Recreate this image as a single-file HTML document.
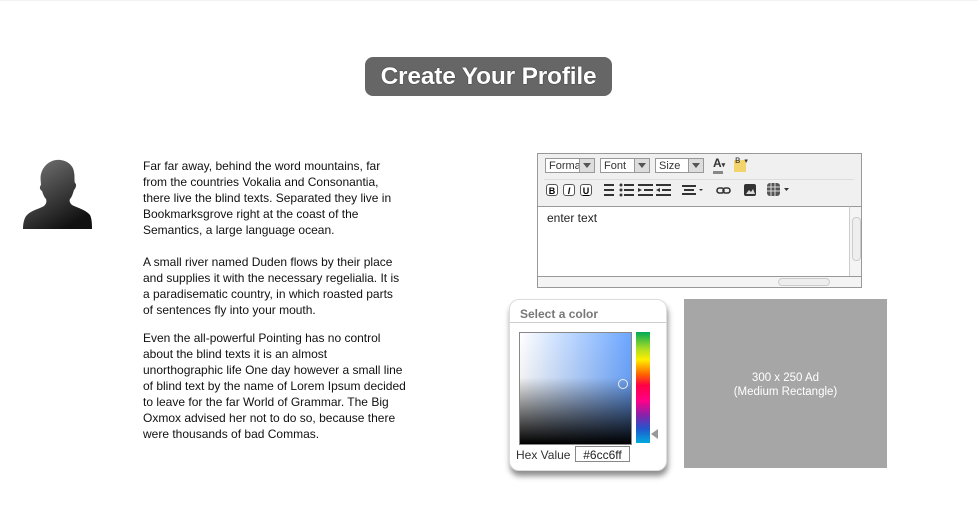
<!DOCTYPE html>
<html><head><style>
body{margin:0;width:978px;height:510px;background:#fff;font-family:"Liberation Sans",Arial,sans-serif;position:relative;overflow:hidden;border-top:1px solid #f2f2f2;box-sizing:border-box}
.abs{position:absolute}
.title{left:365px;top:56px;width:247px;height:39px;background:#666;border-radius:8px;color:#fff;font-weight:bold;font-size:24.5px;line-height:39px;text-align:center;text-shadow:0 0 1px #000;letter-spacing:-0.2px}
.txt{left:143px;font-size:12px;line-height:16px;color:#111}
.ed{left:537px;top:152px;width:325px;height:135px;border:1px solid #999;background:#f0f0f0;box-sizing:border-box;overflow:hidden}
.sel{position:absolute;top:4px;height:15px;border:1px solid #999;background:#fff;font-size:11px;line-height:15px;padding-left:3px;box-sizing:border-box;color:#333}
.sel b{position:absolute;right:0;top:0;width:14px;height:13px;background:#ddd;border-left:1px solid #999}
.sel b:after{content:"";position:absolute;left:3px;top:4px;border:4px solid transparent;border-top:5px solid #555}
.btn{position:absolute;top:30px;width:12px;height:12px;border:1px solid #555;border-radius:3px;font-size:9px;line-height:12px;text-align:center;font-weight:bold;box-sizing:border-box;background:#fff}
.cp{left:509px;top:298px;width:158px;height:172px;background:#fff;border-radius:10px;border:1px solid #ddd;box-shadow:1px 5px 6px rgba(0,0,0,.45);box-sizing:border-box}
.ad{left:684px;top:298px;width:203px;height:169px;background:#a6a6a6;color:#fff;font-size:11.5px;text-align:center;line-height:14px}
</style></head><body>
<div class="abs title">Create Your Profile</div>

<svg class="abs" style="left:23px;top:158px" width="70" height="72" viewBox="0 0 70 72">
<defs><linearGradient id="g" x1="0" y1="0" x2="0.6" y2="1"><stop offset="0" stop-color="#7a7a7a"/><stop offset="1" stop-color="#111"/></linearGradient></defs>
<path d="M33 1c9-1 17 4 18 12 1 5 0 9 1 11 2 1 1 5-1 7-1 3-2 7-4 9-1 2 0 4 2 6 6 3 14 5 18 10 2 4 2 10 2 14H0c0-5 1-11 4-14 5-5 12-6 17-9 2-2 3-4 2-7-2-2-3-5-4-8-2-1-3-4-1-6 0-3-1-7 0-11 2-8 8-13 15-14z" fill="url(#g)"/>
</svg>

<div class="abs txt" style="top:157px">Far far away, behind the word mountains, far<br>from the countries Vokalia and Consonantia,<br>there live the blind texts. Separated they live in<br>Bookmarksgrove right at the coast of the<br>Semantics, a large language ocean.</div>
<div class="abs txt" style="top:253px">A small river named Duden flows by their place<br>and supplies it with the necessary regelialia. It is<br>a paradisematic country, in which roasted parts<br>of sentences fly into your mouth.</div>
<div class="abs txt" style="top:329px">Even the all-powerful Pointing has no control<br>about the blind texts it is an almost<br>unorthographic life One day however a small line<br>of blind text by the name of Lorem Ipsum decided<br>to leave for the far World of Grammar. The Big<br>Oxmox advised her not to do so, because there<br>were thousands of bad Commas.</div>

<div class="abs ed">
 <div class="sel" style="left:7px;width:50px">Forma<b></b></div>
 <div class="sel" style="left:62px;width:50px">Font<b></b></div>
 <div class="sel" style="left:117px;width:49px">Size<b></b></div>
 <div style="position:absolute;left:175px;top:2px;font-size:12px;font-weight:bold;color:#333">A<span style="font-size:7px">▾</span></div>
 <div style="position:absolute;left:175px;top:17px;width:10px;height:3px;background:#888"></div>
 <div style="position:absolute;left:196px;top:6px;width:12px;height:12px;background:#f3d36b"></div>
 <div style="position:absolute;left:197px;top:1px;font-size:10px;color:#333">ʙ<span style="font-size:7px;margin-left:4px">▾</span></div>
 <div style="position:absolute;left:6px;top:25px;width:310px;height:1px;background:#ddd"></div>
 <div class="btn" style="left:8px">B</div><div class="btn" style="left:25px;font-style:italic">I</div><div class="btn" style="left:42px;text-decoration:underline">U</div>
 <svg style="position:absolute;left:62px;top:28px" width="120" height="16"><g fill="#333">
  <rect x="4" y="2" width="10" height="2"/><rect x="4" y="7" width="10" height="2"/><rect x="4" y="12" width="10" height="2"/>
  <circle cx="21" cy="3" r="1.5"/><circle cx="21" cy="8" r="1.5"/><circle cx="21" cy="13" r="1.5"/>
  <rect x="24" y="2" width="10" height="2"/><rect x="24" y="7" width="10" height="2"/><rect x="24" y="12" width="10" height="2"/>
  <rect x="38" y="2" width="15" height="2"/><rect x="44" y="7" width="9" height="2"/><rect x="38" y="12" width="15" height="2"/><path d="M38 6l4 2-4 2z"/>
  <rect x="56" y="2" width="15" height="2"/><rect x="62" y="7" width="9" height="2"/><rect x="56" y="12" width="15" height="2"/><path d="M60 6l-4 2 4 2z"/>
  <rect x="82" y="3" width="14" height="2"/><rect x="84" y="7" width="10" height="2"/><rect x="82" y="11" width="14" height="2"/><path d="M99 7h4l-2 2z"/>
 </g></svg>
 <svg style="position:absolute;left:178px;top:30px" width="60" height="14"><rect x="1" y="4" width="7" height="5" rx="2.5" fill="none" stroke="#333" stroke-width="1.6"/><rect x="7" y="4" width="7" height="5" rx="2.5" fill="none" stroke="#333" stroke-width="1.6"/>
 <rect x="28" y="0" width="12" height="12" rx="2" fill="#333"/><path d="M30 10l3-4 2 2 2-3 2 5z" fill="#ddd"/></svg>
 <svg style="position:absolute;left:228px;top:28px" width="30" height="16"><rect x="1" y="1" width="13" height="13" rx="3" fill="#555"/><path d="M1 5h13M1 9h13M5 1v13M9 1v13" stroke="#ddd"/><path d="M18 6h5l-2.5 3z" fill="#333"/></svg>
 <div style="position:absolute;left:0;top:52px;width:323px;height:70px;background:#fff;border-top:1px solid #999;font-size:12px;color:#222;padding:4px 9px;box-sizing:border-box">enter text</div>
 <div style="position:absolute;right:0;top:52px;width:12px;height:70px;background:#f4f4f4;border-left:1px solid #ccc;border-top:1px solid #999;box-sizing:border-box"><div style="margin:10px 2px;width:7px;height:42px;border:1px solid #ccc;border-radius:4px;background:#eee"></div></div>
 <div style="position:absolute;left:0;top:122px;width:323px;height:11px;background:#f4f4f4;border-top:1px solid #999;box-sizing:border-box"><div style="position:absolute;left:240px;top:1px;width:50px;height:6px;border:1px solid #ccc;border-radius:4px;background:#eee"></div></div>
</div>

<div class="abs cp">
 <div style="position:absolute;left:10px;top:7px;font-size:12px;font-weight:bold;color:#777">Select a color</div>
 <div style="position:absolute;left:0;top:22px;width:156px;height:1px;background:#ccc"></div>
 <div style="position:absolute;left:9px;top:32px;width:111px;height:111px;border:1px solid #888;background:linear-gradient(to bottom,rgba(0,0,0,0) 0%,rgba(0,0,0,.05) 40%,rgba(0,0,0,1) 100%),linear-gradient(to right,#fff,#6ca6ff)"></div>
 <div style="position:absolute;left:108px;top:79px;width:8px;height:8px;border:1px solid #eee;border-radius:50%"></div>
 <div style="position:absolute;left:126px;top:32px;width:14px;height:111px;background:linear-gradient(#00aa55,#aadd22 15%,#ffee00 25%,#ff6600 38%,#ff0044 48%,#ff0088 62%,#8822aa 75%,#2255cc 87%,#00aadd)"></div>
 <div style="position:absolute;left:141px;top:129px;border:5px solid transparent;border-right:7px solid #999;border-left:0"></div>
 <div style="position:absolute;left:6px;top:148px;font-size:12px;color:#333">Hex Value</div>
 <div style="position:absolute;left:65px;top:146px;width:55px;height:16px;border:1px solid #888;font-size:12px;text-align:center;line-height:16px;box-sizing:border-box;color:#222">#6cc6ff</div>
</div>

<div class="abs ad"><div style="margin-top:72px">300 x 250 Ad<br>(Medium Rectangle)</div></div>
</body></html>
